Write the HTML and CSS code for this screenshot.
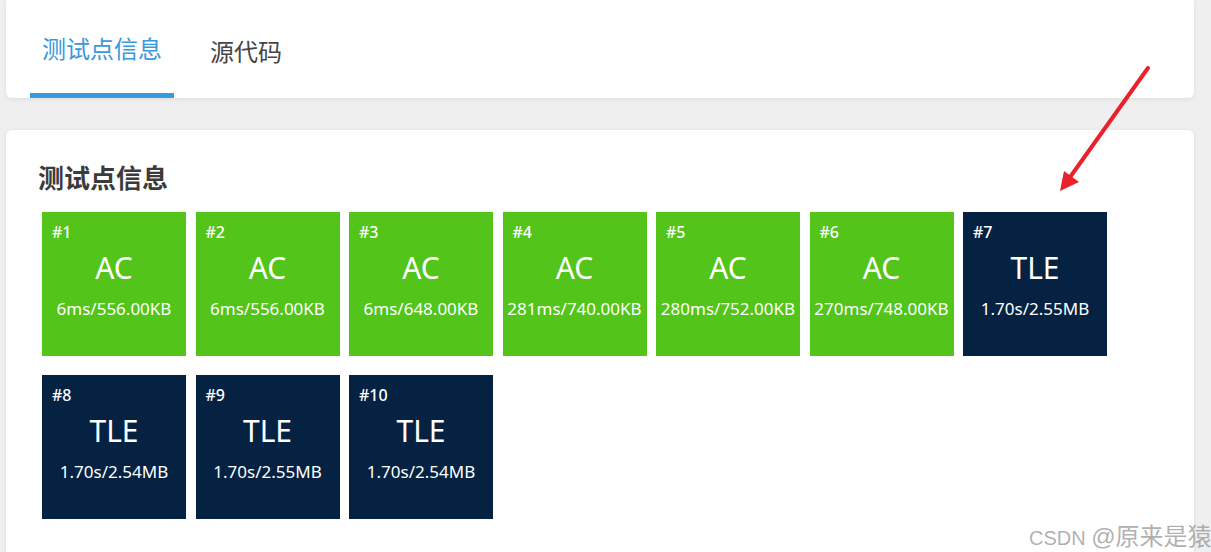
FILE: index.html
```html
<!DOCTYPE html>
<html lang="zh-CN">
<head>
  <meta charset="UTF-8" />
  <title>测试点信息</title>
  <link rel="stylesheet" href="styles.css">
</head>
<body>

  <div class="page">
    <div class="card tabs-card">
      <div class="tab active">测试点信息</div>
      <div class="tab">源代码</div>
    </div>

    <div class="card cases-card">
      <h2>测试点信息</h2>
      <div class="cases">
        <div class="case ac">
          <div class="num">#1</div>
          <div class="status">AC</div>
          <div class="usage">6ms/556.00KB</div>
        </div>
        <div class="case ac">
          <div class="num">#2</div>
          <div class="status">AC</div>
          <div class="usage">6ms/556.00KB</div>
        </div>
        <div class="case ac">
          <div class="num">#3</div>
          <div class="status">AC</div>
          <div class="usage">6ms/648.00KB</div>
        </div>
        <div class="case ac">
          <div class="num">#4</div>
          <div class="status">AC</div>
          <div class="usage">281ms/740.00KB</div>
        </div>
        <div class="case ac">
          <div class="num">#5</div>
          <div class="status">AC</div>
          <div class="usage">280ms/752.00KB</div>
        </div>
        <div class="case ac">
          <div class="num">#6</div>
          <div class="status">AC</div>
          <div class="usage">270ms/748.00KB</div>
        </div>
        <div class="case tle">
          <div class="num">#7</div>
          <div class="status">TLE</div>
          <div class="usage">1.70s/2.55MB</div>
        </div>
        <div class="case tle">
          <div class="num">#8</div>
          <div class="status">TLE</div>
          <div class="usage">1.70s/2.54MB</div>
        </div>
        <div class="case tle">
          <div class="num">#9</div>
          <div class="status">TLE</div>
          <div class="usage">1.70s/2.55MB</div>
        </div>
        <div class="case tle">
          <div class="num">#10</div>
          <div class="status">TLE</div>
          <div class="usage">1.70s/2.54MB</div>
        </div>
      </div>
    </div>
  </div>

  <!-- annotation arrow drawn over the screenshot -->
  <svg class="arrow" width="100" height="135" viewBox="1055 62 100 135">
    <line x1="1148" y1="68" x2="1068" y2="180" stroke="#e9212b" stroke-width="4" stroke-linecap="round" />
    <polygon points="1060,191 1064,171 1079,182" fill="#e9212b" />
  </svg>

  <div class="watermark">CSDN <span>@原来是猿</span></div>

</body>
</html>
```

FILE: styles.css
```css
body, html {
  margin: 0;
  padding: 0;
  background-color: #efefef;
  font-family: 'Noto Sans', 'Noto Sans CJK SC', sans-serif;
  height: 552px;
  overflow: hidden;
}

.page {
  padding: 0 17px 0 6px;
}

.card {
  background: white;
  box-shadow: 0 1px 4px rgba(0, 0, 0, 0.08);
}

.tabs-card {
  height: 98px;
  border-radius: 0 0 6px 6px;
  display: flex;
  gap: 24px;
  padding-left: 24px;
}

.tab {
  padding: 5px 12px 0;
  font-size: 24px;
  line-height: 93px;
  color: #454545;
  box-sizing: border-box;
  height: 98px;
}

.tab.active {
  color: #3a98dc;
  border-bottom: 5px solid #3a98dc;
  line-height: 88px;
}

.cases-card {
  margin-top: 32px;
  border-radius: 6px 6px 0 0;
  padding: 30px 32px 0;
  height: 422px;
  box-sizing: border-box;
}

.cases-card h2 {
  margin: 0 0 16px 0;
  font-size: 26px;
  line-height: 36px;
  font-weight: 700;
  color: #3b3b3b;
}

.cases {
  display: flex;
  flex-wrap: wrap;
  gap: 19px 9.5px;
  margin-left: 4px;
  width: 1070px;
}

.case {
  width: 144px;
  height: 144px;
  box-sizing: border-box;
  padding: 11px 10px 0;
  color: white;
}

.case.ac {
  background-color: #52c41a;
}

.case.tle {
  background-color: #052242;
}

.num {
  font-size: 16px;
  line-height: 18px;
  font-weight: 500;
}

.status {
  margin-top: 9px;
  font-size: 30px;
  line-height: 36px;
  text-align: center;
}

.usage {
  margin-top: 13px;
  font-size: 17px;
  line-height: 20px;
  text-align: center;
  white-space: nowrap;
  margin-left: -10px;
  margin-right: -10px;
}

.arrow {
  position: absolute;
  left: 1055px;
  top: 62px;
}

.watermark {
  position: absolute;
  left: 1029px;
  top: 517px;
  font-family: 'Liberation Sans', 'Noto Sans CJK SC', sans-serif;
  font-size: 20px;
  color: rgba(150, 150, 150, 0.75);
  white-space: nowrap;
}

.watermark span {
  font-size: 24px;
}
```
